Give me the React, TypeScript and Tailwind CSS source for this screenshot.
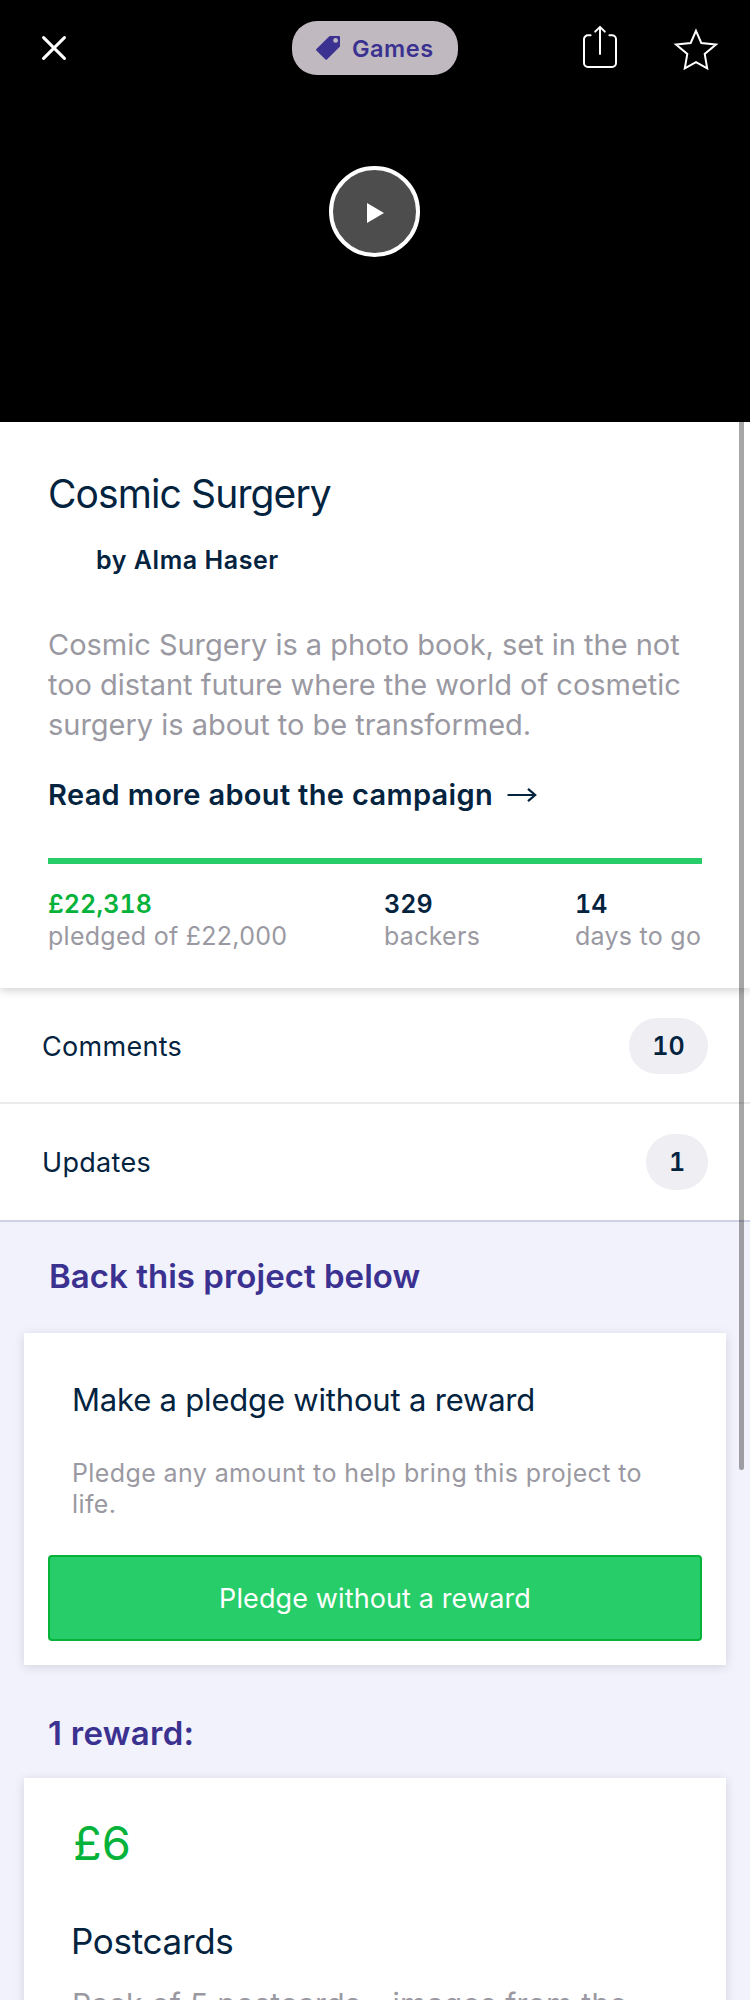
import React from "react";

function CloseIcon() {
  return (
    <svg className="h-6 w-6" viewBox="0 0 24 24" fill="none" stroke="white" strokeWidth="3" strokeLinecap="round">
      <path d="M1.6 1.6 22.4 22.4M22.4 1.6 1.6 22.4" />
    </svg>
  );
}

function TagIcon() {
  return (
    <svg className="h-6 w-6" viewBox="0 0 24 24" fill="#3b3190">
      <path
        fillRule="evenodd"
        d="M13.6 0H23a1 1 0 0 1 1 1v9.6L10.9 23.6a1 1 0 0 1-1.4 0L.4 14.5a1 1 0 0 1 0-1.4ZM19.6 2a2.4 2.4 0 1 0 0 4.8 2.4 2.4 0 0 0 0-4.8Z"
      />
    </svg>
  );
}

function ShareIcon() {
  return (
    <svg className="h-[54px] w-[34px]" viewBox="0 0 34 54" fill="none" stroke="white" strokeWidth="2" strokeLinecap="round" strokeLinejoin="round">
      <path d="M7.6 14.3H5a4 4 0 0 0-4 4V42a4 4 0 0 0 4 4h24a4 4 0 0 0 4-4V18.300a4 4 0 0 0-4-4h-2.600" />
      <path d="M17 33V6M12.200 10.600 17 5.900l4.800 4.700" />
    </svg>
  );
}

function StarIcon() {
  return (
    <svg className="h-[54px] w-[46px]" viewBox="0 0 46 54" fill="none" stroke="white" strokeWidth="2">
      <path d="M23 9.800 28.300 22 43 23.500 31.700 33 34.200 47.400 23 41.200 11.800 47.400 14.300 33 3 23.500 17.700 22Z" />
    </svg>
  );
}

function Stat({ value, label, green = false }: { value: string; label: string; green?: boolean }) {
  return (
    <div className="text-[25px] leading-8 whitespace-nowrap">
      <div className={`font-semibold tracking-[0.1px] tabular-nums ${green ? "text-[#05b23a]" : "text-[#03233f]"}`}>{value}</div>
      <div className="tracking-[0.27px] text-[#9a99a2]">{label}</div>
    </div>
  );
}

function LinkRow({ label, count, last = false }: { label: string; count: string; last?: boolean }) {
  return (
    <div
      className={`flex items-center justify-between border-b-2 bg-white pt-[30px] pr-[42px] pl-[42px] ${
        last ? "border-[#cfd2e4] pb-[30px]" : "border-[#ebebec] pb-7"
      }`}
    >
      <span className="pt-[2px] text-[27px] leading-8 tracking-[0.3px]">{label}</span>
      <span
        className={`flex h-14 items-center justify-center rounded-full bg-[#eeeef3] pt-[2px] text-[25px] font-semibold tabular-nums ${
          last ? "w-[62px]" : "w-[79px]"
        }`}
      >
        {count}
      </span>
    </div>
  );
}

export default function App() {
  return (
    <div className="relative h-[2000px] w-[750px] overflow-hidden bg-[#f1f2fb] font-['Inter',sans-serif] text-[#03233f]">
      <header className="h-[422px] bg-black pt-[21px]">
        <div className="flex h-[54px] items-center pl-[42px]">
          <CloseIcon />
          <div className="ml-[226px] flex h-[54px] w-[166px] items-center rounded-[25px] bg-[#c0bac0] pl-6 text-[#3b3190]">
            <TagIcon />
            <span className="ml-3 pt-px text-[23.5px] leading-8 font-semibold tracking-[0.5px]">Games</span>
          </div>
          <div className="ml-[125px]">
            <ShareIcon />
          </div>
          <div className="ml-14">
            <StarIcon />
          </div>
        </div>
        <div className="mt-[91px] ml-[329px] flex h-[91px] w-[91px] items-center justify-center rounded-full border-4 border-white bg-[#4d4d4d]">
          <svg className="mt-[2px] ml-[2px] h-5 w-[17px]" viewBox="0 0 17 20" fill="white">
            <path d="M0 0 17 10 0 20Z" />
          </svg>
        </div>
      </header>

      <section className="relative z-10 h-[566px] bg-white px-12 pt-12 shadow-[0_3px_8px_rgba(0,0,0,0.17)]">
        <h1 className="text-[39px] leading-[48px] tracking-[-0.89px]">Cosmic Surgery</h1>
        <p className="mt-[26px] ml-12 text-[25px] leading-8 font-semibold tracking-[0.56px]">by Alma Haser</p>
        <p className="mt-[49px] text-[29px] leading-10 tracking-[-0.02px] whitespace-nowrap text-[#9a99a2]">
          Cosmic Surgery is a photo book, set in the not
          <br />
          too distant future where the world of cosmetic
          <br />
          surgery is about to be transformed.
        </p>
        <div className="mt-[30px] flex items-center">
          <span className="text-[29px] leading-10 font-semibold tracking-[0.33px]">Read more about the campaign</span>
          <svg className="ml-[14px] h-4 w-[30px]" viewBox="0 0 30 16" fill="none" stroke="#03233f" strokeWidth="2.200">
            <path d="M.5 8H28M21 1.800 28.200 8 21 14.200" />
          </svg>
        </div>
        <div className="mt-[43px] h-[6px] bg-[#27cd69]" />
        <div className="mt-6 grid grid-cols-[336px_191px_1fr]">
          <Stat value="£22,318" label="pledged of £22,000" green />
          <Stat value="329" label="backers" />
          <Stat value="14" label="days to go" />
        </div>
      </section>

      <nav>
        <LinkRow label="Comments" count="10" />
        <LinkRow label="Updates" count="1" last />
      </nav>

      <main className="px-6 pt-[34px]">
        <h2 className="ml-[25px] text-[33px] leading-10 font-semibold tracking-[0.03px] text-[#3b3190]">Back this project below</h2>
        <div className="mt-[37px] bg-white px-6 pt-[47px] pb-6 shadow-[0_2px_10px_rgba(0,0,0,0.13)]">
          <h3 className="ml-6 text-[31px] leading-10 tracking-[-0.19px]">Make a pledge without a reward</h3>
          <p className="mt-[38px] ml-6 text-[25px] leading-[31px] tracking-[0.39px] whitespace-nowrap text-[#9a99a2]">
            Pledge any amount to help bring this project to
            <br />
            life.
          </p>
          <button className="mt-[35px] flex h-[86px] w-full items-center justify-center rounded-[4px] border-2 border-[#05b23a] bg-[#27cd69] pt-[2px] text-[27px] tracking-[0.12px] text-white">
            Pledge without a reward
          </button>
        </div>
        <h2 className="mt-12 ml-6 text-[33px] leading-10 font-semibold tracking-[0.3px] text-[#3b3190]">1 reward:</h2>
        <div className="mt-[25px] h-[400px] bg-white px-6 pt-[37px] shadow-[0_2px_10px_rgba(0,0,0,0.13)]">
          <div className="ml-[25px] text-[47px] leading-[56px] text-[#05b23a]">£6</div>
          <h3 className="mt-12 ml-[23px] text-[35px] leading-[44px] tracking-[-0.3px]">Postcards</h3>
          <p className="mt-[21px] ml-6 text-[30px] leading-10 tracking-[0.3px] whitespace-nowrap text-[#9a99a2]">
            Pack of 5 postcards - images from the
          </p>
        </div>
      </main>

      <div className="absolute top-[422px] left-[739px] z-20 h-[1048px] w-[5px] rounded-b-full bg-black/35" />
    </div>
  );
}
